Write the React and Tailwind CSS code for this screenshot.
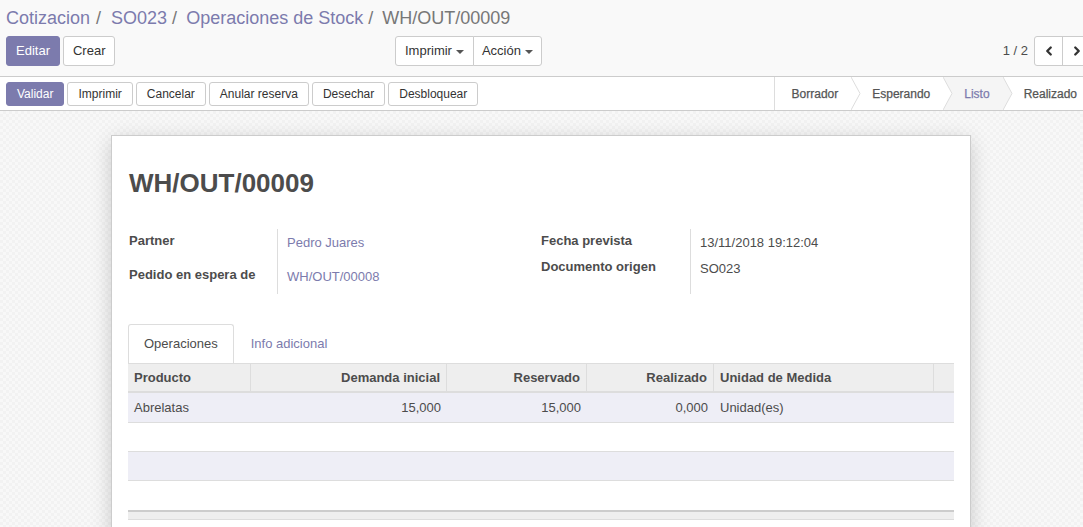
import React from "react";
import { ChevronLeft, ChevronRight } from "lucide-react";

const Caret = () => (
  <span className="ml-1 inline-block h-0 w-0 border-x-[4px] border-t-[4px] border-x-transparent border-t-[#555] align-middle" />
);

const Btn = ({ children, primary }) => (
  <button
    type="button"
    className={
      primary
        ? "h-[30px] rounded-[3px] border border-[#7c7bad] bg-[#7c7bad] px-[9px] text-[13px] text-white"
        : "h-[30px] rounded-[3px] border border-[#ccc] bg-white px-[9px] text-[13px] text-[#333]"
    }
  >
    {children}
  </button>
);

const SmallBtn = ({ children, primary }) => (
  <button
    type="button"
    className={
      primary
        ? "h-[24px] rounded-[3px] border border-[#7c7bad] bg-[#7c7bad] px-[10px] text-[12px] text-white"
        : "h-[24px] rounded-[3px] border border-[#ccc] bg-white px-[10px] text-[12px] text-[#333]"
    }
  >
    {children}
  </button>
);

const Stage = ({ label, active, first, last }) => (
  <div
    className={
      "relative flex h-full items-center text-[12px] [-webkit-text-stroke:0.25px_currentColor] " +
      (first ? "pl-[17px] " : "pl-[20px] ") +
      (last ? "pr-[6px] " : "pr-[14px] ") +
      (active ? "bg-[#f5f5f5] text-[#7c7bad]" : "bg-white text-[#555]")
    }
  >
    {label}
    {!last && (
      <svg className="absolute -right-[9px] top-0 z-10" width="10" height="33" viewBox="0 0 10 33">
        <path d="M0 0 L9 16.5 L0 33" fill={active ? "#f5f5f5" : "#fff"} stroke="#ddd" strokeWidth="1" />
      </svg>
    )}
  </div>
);

const cols = [
  { label: "Producto", w: "w-[123px]", align: "text-left" },
  { label: "Demanda inicial", w: "w-[196px]", align: "text-right" },
  { label: "Reservado", w: "w-[140px]", align: "text-right" },
  { label: "Realizado", w: "w-[127px]", align: "text-right" },
  { label: "Unidad de Medida", w: "w-[220px]", align: "text-left" },
  { label: "", w: "w-[20px]", align: "text-left" },
];

const row = ["Abrelatas", "15,000", "15,000", "0,000", "Unidad(es)", ""];

export default function App() {
  return (
    <div className="flex h-[527px] w-[1083px] flex-col overflow-hidden bg-[#f3f3f3] font-['Liberation_Sans',Arial,sans-serif] text-[13px] text-[#4c4c4c]">
      {/* Control panel */}
      <div className="flex-none border-b border-[#ccc] bg-[#f9f9f9] px-[6px]">
        <div className="flex h-[36px] items-center text-[18px] text-[#7c7bad]">
          <span>Cotizacion</span>
          <span className="px-[6px] text-[#777]">/</span>
          <span className="pl-[4px]">SO023</span>
          <span className="px-[5px] text-[#777]">/</span>
          <span className="pl-[4px]">Operaciones de Stock</span>
          <span className="px-[5px] text-[#777]">/</span>
          <span className="pl-[4px] text-[#777]">WH/OUT/00009</span>
        </div>
        <div className="flex h-[40px] items-start">
          <div className="flex w-[389px] gap-[3px]">
            <Btn primary>Editar</Btn>
            <Btn>Crear</Btn>
          </div>
          <div className="flex">
            <button type="button" className="h-[30px] rounded-l-[3px] border border-[#ccc] bg-white px-[9px] text-[13px] text-[#333]">
              Imprimir<Caret />
            </button>
            <button type="button" className="-ml-px h-[30px] rounded-r-[3px] border border-[#ccc] bg-white px-[8px] text-[13px] text-[#333]">
              Acción<Caret />
            </button>
          </div>
          <div className="ml-auto -mr-[14px] flex items-center">
            <span className="mr-[6px] text-[13px] text-[#4c4c4c]">1 / 2</span>
            <button type="button" className="flex h-[30px] w-[29px] items-center justify-center rounded-l-[3px] border border-[#ccc] bg-white">
              <ChevronLeft size={14} strokeWidth={4} className="text-[#333]" />
            </button>
            <button type="button" className="-ml-px flex h-[30px] w-[29px] items-center justify-center border border-[#ccc] bg-white">
              <ChevronRight size={14} strokeWidth={4} className="text-[#333]" />
            </button>
          </div>
        </div>
      </div>

      {/* Status bar */}
      <div className="flex h-[34px] flex-none items-center border-b border-[#ccc] bg-white pl-[6px]">
        <div className="flex gap-[3px]">
          <SmallBtn primary>Validar</SmallBtn>
          <SmallBtn>Imprimir</SmallBtn>
          <SmallBtn>Cancelar</SmallBtn>
          <SmallBtn>Anular reserva</SmallBtn>
          <SmallBtn>Desechar</SmallBtn>
          <SmallBtn>Desbloquear</SmallBtn>
        </div>
        <div className="ml-auto flex h-full border-l border-[#ddd]">
          <Stage label="Borrador" first />
          <Stage label="Esperando" />
          <Stage label="Listo" active />
          <Stage label="Realizado" last />
        </div>
      </div>

      {/* Sheet area */}
      <div className="min-h-0 flex-1 bg-[repeating-conic-gradient(#f2f2f2_0%_25%,#f8f8f8_0%_50%)] bg-[length:6px_6px] pt-[24px]">
        <div className="ml-[111px] w-[860px] border border-[#ccc] bg-white px-[16px] pt-[30px] pb-[20px] shadow-[0_5px_20px_-1px_rgba(0,0,0,0.2)]">
          <h1 className="pl-px text-[26px] font-bold leading-[34px] text-[#4c4c4c]">WH/OUT/00009</h1>

          <div className="mt-[29px] flex pl-px">
            <div className="flex w-[412px]">
              <div className="w-[149px] border-r border-[#ddd] pb-[5px] font-bold">
                <div className="h-[34px] pt-[2px]">Partner</div>
                <div className="h-[26px] pt-[2px]">Pedido en espera de</div>
              </div>
              <div className="pl-[9px] text-[#7c7bad]">
                <div className="h-[34px] pt-[4px]">Pedro Juares</div>
                <div className="pt-[4px]">WH/OUT/00008</div>
              </div>
            </div>
            <div className="flex">
              <div className="w-[150px] border-r border-[#ddd] pb-[3px] font-bold">
                <div className="h-[27px] pt-[2px]">Fecha prevista</div>
                <div className="pt-[1px]">Documento origen</div>
              </div>
              <div className="pl-[9px]">
                <div className="h-[27px] pt-[4px]">13/11/2018 19:12:04</div>
                <div className="pt-[3px]">SO023</div>
              </div>
            </div>
          </div>

          {/* Tabs */}
          <div className="mt-[30px] flex h-[39px] items-end">
            <div className="flex h-[39px] items-center rounded-t-[3px] border border-b-0 border-[#ddd] bg-white px-[15px] text-[#4c4c4c]">
              Operaciones
            </div>
            <div className="flex h-[39px] items-center px-[17px] text-[#7c7bad]">Info adicional</div>
          </div>

          {/* Table */}
          <div className="w-[826px]">
            <div className="flex h-[30px] items-center border-b-2 border-t border-[#ddd] bg-[#eee] font-bold text-[#4c4c4c]">
              {cols.map((c, i) => (
                <div key={i} className={`${c.w} ${c.align} flex-none truncate px-[6px] ${i < cols.length - 1 ? "border-r border-[#ddd]" : ""} leading-[28px]`}>
                  {c.label}
                </div>
              ))}
            </div>
            <div className="flex h-[30px] items-center border-b border-[#ddd] bg-[#eeeef6]">
              {row.map((v, i) => (
                <div key={i} className={`${cols[i].w} ${cols[i].align} flex-none px-[6px]`}>{v}</div>
              ))}
            </div>
            <div className="h-[29px] border-b border-[#ddd] bg-white" />
            <div className="h-[29px] border-b border-[#ddd] bg-[#eeeef6]" />
            <div className="h-[29px] bg-white" />
            <div className="h-[10px] border-b border-t-2 border-[#ccc] border-b-[#ddd] bg-[#eee]" />
          </div>
        </div>
      </div>
    </div>
  );
}
